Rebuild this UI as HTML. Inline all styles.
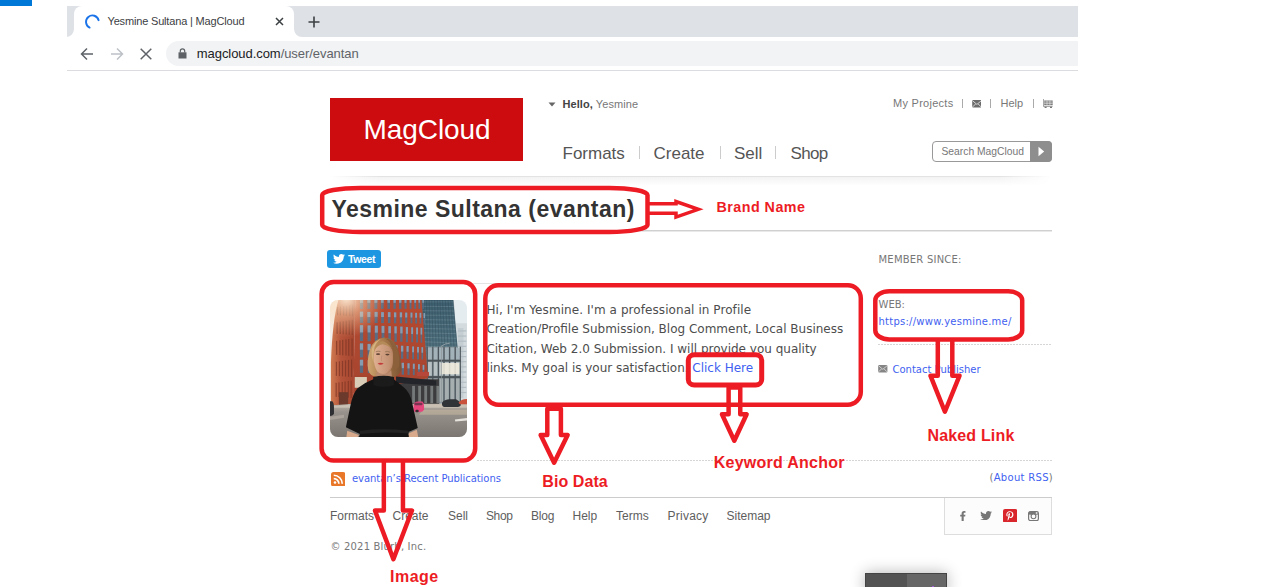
<!DOCTYPE html>
<html lang="en">
<head>
<meta charset="utf-8">
<title>Yesmine Sultana | MagCloud</title>
<style>
html,body{margin:0;padding:0;background:#fff;}
body{width:1262px;height:587px;position:relative;overflow:hidden;font-family:"Liberation Sans",sans-serif;}
.a{position:absolute;}
.t{position:absolute;white-space:nowrap;line-height:1;margin:0;padding:0;}
.v{font-family:"DejaVu Sans","Liberation Sans",sans-serif;}
.blue{color:#3f5ff0;}
.dot{height:1px;background:repeating-linear-gradient(90deg,#d6d6d6 0,#d6d6d6 1.6px,transparent 1.6px,transparent 3px);}
</style>
</head>
<body>
<!-- ============ browser chrome ============ -->
<div class="a" style="left:0;top:0;width:32px;height:6px;background:#0078d7"></div>
<div class="a" id="tabbar" style="left:67px;top:6px;width:1011px;height:31px;background:#dee1e6"></div>
<div class="a" id="tab" style="left:74px;top:6px;width:220px;height:31px;background:#fff;border-radius:8px 8px 0 0"></div>
<svg class="a" style="left:66px;top:29px" width="8" height="8" viewBox="0 0 8 8"><path d="M8 0V8H0A8 8 0 0 0 8 0Z" fill="#fff"/></svg>
<svg class="a" style="left:294px;top:29px" width="8" height="8" viewBox="0 0 8 8"><path d="M0 0V8H8A8 8 0 0 1 0 0Z" fill="#fff"/></svg>
<svg class="a" style="left:84px;top:13px" width="17" height="17" viewBox="0 0 17 17"><path d="M5.6 14.6A6.4 6.4 0 1 1 14.6 7.2" fill="none" stroke="#1a73e8" stroke-width="1.9" stroke-linecap="round"/></svg>
<span class="t" id="tabtitle" style="left:107.5px;top:16px;font-size:11px;letter-spacing:-0.17px;color:#3c4043">Yesmine Sultana | MagCloud</span>
<svg class="a" style="left:275px;top:17px" width="9" height="9" viewBox="0 0 9 9"><path d="M1 1L8 8M8 1L1 8" stroke="#3c4043" stroke-width="1.5" fill="none"/></svg>
<svg class="a" style="left:308px;top:16px" width="12" height="12" viewBox="0 0 12 12"><path d="M6 0.5V11.5M0.5 6H11.5" stroke="#3c4043" stroke-width="1.6" fill="none"/></svg>
<!-- toolbar -->
<svg class="a" style="left:80px;top:47px" width="14" height="14" viewBox="0 0 14 14"><path d="M13 7H2M7 1.5L1.5 7L7 12.5" stroke="#5f6368" stroke-width="1.5" fill="none"/></svg>
<svg class="a" style="left:110px;top:47px" width="14" height="14" viewBox="0 0 14 14"><path d="M1 7H12M7 1.5L12.5 7L7 12.5" stroke="#bdc1c6" stroke-width="1.5" fill="none"/></svg>
<svg class="a" style="left:140px;top:48px" width="12" height="12" viewBox="0 0 12 12"><path d="M0.7 0.7L11.3 11.3M11.3 0.7L0.7 11.3" stroke="#5f6368" stroke-width="1.5" fill="none"/></svg>
<div class="a" id="pill" style="left:166px;top:41px;width:912px;height:25px;background:#f1f3f4;border-radius:13px 0 0 13px"></div>
<svg class="a" style="left:178px;top:48px" width="9" height="11" viewBox="0 0 9 11"><path d="M0.5 4.3h8v6.2h-8z" fill="#5f6368"/><path d="M2.3 4.5V3a2.2 2.2 0 0 1 4.4 0v1.5" stroke="#5f6368" stroke-width="1.2" fill="none"/></svg>
<span class="t" id="url" style="left:196.8px;top:47px;font-size:13px;letter-spacing:-0.06px;color:#202124">magcloud.com<span style="color:#5f6368">/user/evantan</span></span>
<div class="a" style="left:67px;top:70px;width:1011px;height:1px;background:#dadce0"></div>

<!-- ============ page header ============ -->
<div class="a" id="logo" style="left:330px;top:98px;width:193px;height:62.5px;background:#cd0c10"></div>
<span class="t" id="logotext" style="left:363.6px;top:116px;font-size:28px;color:#fff;letter-spacing:-0.08px">MagCloud</span>
<svg class="a" style="left:548px;top:102px" width="8" height="5" viewBox="0 0 8 5"><path d="M0.5 0.5h7L4 4.5z" fill="#666"/></svg>
<span class="t" id="hello" style="left:562.5px;top:98.5px;letter-spacing:0.07px;font-size:11px;color:#444"><b>Hello,</b> <span style="color:#777">Yesmine</span></span>
<span class="t" id="n1" style="margin-top:0.5px;left:562.5px;top:144px;font-size:17px;color:#555">Formats</span>
<span class="t" id="n2" style="margin-top:0.5px;left:653.5px;top:144px;font-size:17px;color:#555">Create</span>
<span class="t" id="n3" style="margin-top:0.5px;left:734px;top:144px;font-size:17px;color:#555">Sell</span>
<span class="t" id="n4" style="margin-top:0.5px;left:790.5px;top:144px;font-size:17px;letter-spacing:-0.7px;color:#555">Shop</span>
<div class="a" style="left:639px;top:146px;width:1px;height:13px;background:#ccc"></div>
<div class="a" style="left:720px;top:146px;width:1px;height:13px;background:#ccc"></div>
<div class="a" style="left:775px;top:146px;width:1px;height:13px;background:#ccc"></div>
<span class="t" id="myp" style="left:893px;top:98.3px;font-size:11px;letter-spacing:0.27px;color:#777">My Projects</span>
<span class="t" id="help" style="left:1000.5px;top:98.3px;font-size:11px;color:#777">Help</span>
<div class="a" style="left:962px;top:99px;width:1px;height:9px;background:#aaa"></div>
<div class="a" style="left:990px;top:99px;width:1px;height:9px;background:#aaa"></div>
<div class="a" style="left:1033px;top:99px;width:1px;height:9px;background:#aaa"></div>
<svg class="a" id="mail1" style="left:971.6px;top:100.1px" width="9.8" height="7.5" viewBox="0 0 10 8"><rect x="0" y="0" width="10" height="8" rx="1" fill="#6a6a6a"/><path d="M0.5 0.9L5 4.7L9.5 0.9M0.6 7.300L3.600 4.200M9.400 7.300L6.400 4.200" stroke="#f0f0f0" stroke-width="0.85" fill="none"/></svg>
<svg class="a" id="cart" style="left:1042.5px;top:99px" width="10" height="9" viewBox="0 0 10 9"><path d="M0.3 0V7.3H9.6" stroke="#777" stroke-width="0.8" fill="none"/><rect x="1.2" y="1.5" width="8.5" height="4.6" fill="#777"/><path d="M1.2 3h8.5M1.2 4.6h8.5M4 1.5v4.6M6.9 1.5v4.6" stroke="#fff" stroke-width="0.5"/><rect x="1.6" y="7.8" width="2" height="1.2" fill="#777"/><rect x="7" y="7.8" width="2" height="1.2" fill="#777"/></svg>
<div class="a" id="search" style="left:932px;top:141px;width:119px;height:20px;border:1px solid #999;border-radius:4px;background:#fff;box-sizing:border-box;width:120px;height:21px"></div>
<div class="a" style="left:1030px;top:141px;width:22px;height:21px;background:#8e8e8e;border-radius:0 4px 4px 0"></div>
<svg class="a" style="left:1038px;top:146px" width="7" height="11" viewBox="0 0 7 11"><path d="M0.5 0.8L6.2 5.5L0.5 10.2z" fill="#fff"/></svg>
<span class="t" id="srch" style="left:941.5px;top:146.5px;font-size:10.3px;color:#777">Search MagCloud</span>
<div class="a" style="left:330px;top:176px;width:722px;height:1px;background:linear-gradient(90deg,rgba(226,226,226,0) 0,#e3e3e3 50px,#e3e3e3 670px,rgba(226,226,226,0) 100%)"></div>
<div class="a" style="left:330px;top:177px;width:722px;height:9px;background:linear-gradient(#f3f3f3,#fff);-webkit-mask-image:linear-gradient(90deg,transparent 0,#000 50px,#000 670px,transparent 100%);mask-image:linear-gradient(90deg,transparent 0,#000 50px,#000 670px,transparent 100%)"></div>

<!-- ============ page body ============ -->
<h1 class="t" id="title" style="left:331.4px;top:198.2px;font-size:23px;letter-spacing:0.48px;font-weight:bold;color:#333">Yesmine Sultana (evantan)</h1>
<div class="a" style="left:330px;top:230px;width:722px;height:2px;background:linear-gradient(#d0d0d0 0,#d0d0d0 50%,#e9e9e9 50%,#e9e9e9 100%)"></div>
<div class="a" id="tweet" style="left:327px;top:250px;width:54px;height:18px;background:#1d96e1;border-radius:3px"></div>
<svg class="a" style="left:333px;top:254px" width="12" height="10" viewBox="0 0 24 20"><path d="M24 2.4c-.9.4-1.8.7-2.8.8 1-.6 1.8-1.600 2.200-2.700-1 .6-2 1-3.100 1.200C19.400.7 18.100 0 16.600 0c-2.700 0-4.900 2.200-4.900 4.900 0 .4 0 .8.100 1.100C7.700 5.800 4.100 3.900 1.700.9 1.200 1.600 1 2.500 1 3.400c0 1.700.9 3.200 2.200 4.100-.8 0-1.600-.2-2.200-.6v.1c0 2.400 1.700 4.400 3.900 4.800-.4.100-.8.200-1.300.2-.3 0-.6 0-.9-.1.600 2 2.400 3.400 4.600 3.400-1.700 1.300-3.800 2.100-6.100 2.100-.4 0-.8 0-1.200-.1 2.200 1.400 4.800 2.200 7.500 2.200 9.100 0 14-7.500 14-14v-.6c1-.7 1.800-1.600 2.500-2.500z" fill="#fff"/></svg>
<span class="t" id="tweettxt" style="left:348px;top:254px;font-size:10.5px;font-weight:bold;color:#fff;letter-spacing:-0.4px">Tweet</span>
<div class="a" style="left:330px;top:283px;width:520px;height:1px;background:#e4e4e4"></div>

<!-- photo placeholder (replaced later) -->
<svg class="a" id="photo" style="left:330px;top:300px" width="137" height="137" viewBox="0 0 587 587"><defs>
<clipPath id="pc"><rect x="0" y="0" width="587" height="587" rx="34"/></clipPath>
<linearGradient id="sky" x1="0" y1="0" x2="1" y2="0"><stop offset="0" stop-color="#f3efec"/><stop offset="0.5" stop-color="#e9ecee"/><stop offset="1" stop-color="#e4ecf0"/></linearGradient>
<linearGradient id="road" x1="0" y1="0" x2="0" y2="1"><stop offset="0" stop-color="#b9b0a6"/><stop offset="0.25" stop-color="#98928c"/><stop offset="1" stop-color="#7b7671"/></linearGradient>
<linearGradient id="redf" x1="0" y1="0" x2="0" y2="1"><stop offset="0" stop-color="#b54a31"/><stop offset="1" stop-color="#a5442f"/></linearGradient>
<linearGradient id="reds" x1="0" y1="0" x2="1" y2="0"><stop offset="0" stop-color="#cf7a50"/><stop offset="0.4" stop-color="#b5543a"/><stop offset="1" stop-color="#a5452f"/></linearGradient>
<linearGradient id="glass" x1="0" y1="0" x2="0" y2="1"><stop offset="0" stop-color="#3d5e6e"/><stop offset="0.45" stop-color="#4f6f7d"/><stop offset="0.75" stop-color="#7e93a0"/><stop offset="1" stop-color="#5a6468"/></linearGradient>
<linearGradient id="hair" x1="0" y1="0" x2="1" y2="0"><stop offset="0" stop-color="#cfa671"/><stop offset="0.45" stop-color="#a87a4b"/><stop offset="1" stop-color="#7d5433"/></linearGradient>
<linearGradient id="skin" x1="0" y1="0" x2="1" y2="0"><stop offset="0" stop-color="#e0b092"/><stop offset="1" stop-color="#bd8a6c"/></linearGradient>
<radialGradient id="flare" cx="70" cy="-10" r="170" gradientUnits="userSpaceOnUse"><stop offset="0" stop-color="#fff3e0" stop-opacity="0.95"/><stop offset="0.45" stop-color="#ffd9b0" stop-opacity="0.5"/><stop offset="1" stop-color="#ffd0a0" stop-opacity="0"/></radialGradient>
</defs>
<g clip-path="url(#pc)">
<rect width="587" height="587" fill="url(#sky)"/>
<path d="M540,100H587V430H540Z" fill="#d3dbde"/>
<path d="M548,120H572V420H548Z" fill="#c4ced3"/>
<rect x="548" y="130" width="36" height="5" fill="#b3bec4"/>
<rect x="548" y="152" width="36" height="5" fill="#b3bec4"/>
<rect x="548" y="174" width="36" height="5" fill="#b3bec4"/>
<rect x="548" y="196" width="36" height="5" fill="#b3bec4"/>
<rect x="548" y="218" width="36" height="5" fill="#b3bec4"/>
<rect x="548" y="240" width="36" height="5" fill="#b3bec4"/>
<rect x="548" y="262" width="36" height="5" fill="#b3bec4"/>
<rect x="548" y="284" width="36" height="5" fill="#b3bec4"/>
<rect x="548" y="306" width="36" height="5" fill="#b3bec4"/>
<rect x="548" y="328" width="36" height="5" fill="#b3bec4"/>
<rect x="548" y="350" width="36" height="5" fill="#b3bec4"/>
<rect x="548" y="372" width="36" height="5" fill="#b3bec4"/>
<rect x="548" y="394" width="36" height="5" fill="#b3bec4"/>
<path d="M390,0H528L556,300V440H400Z" fill="url(#glass)"/>
<path d="M395,8L530,8" stroke="#9fb6c0" stroke-width="2.2" opacity="0.55"/>
<path d="M395,27L532,28" stroke="#9fb6c0" stroke-width="2.2" opacity="0.55"/>
<path d="M395,46L533,47" stroke="#9fb6c0" stroke-width="2.2" opacity="0.55"/>
<path d="M395,65L535,66" stroke="#9fb6c0" stroke-width="2.2" opacity="0.55"/>
<path d="M395,84L536,86" stroke="#9fb6c0" stroke-width="2.2" opacity="0.55"/>
<path d="M395,103L538,106" stroke="#9fb6c0" stroke-width="2.2" opacity="0.55"/>
<path d="M395,122L540,125" stroke="#9fb6c0" stroke-width="2.2" opacity="0.55"/>
<path d="M395,141L541,144" stroke="#9fb6c0" stroke-width="2.2" opacity="0.55"/>
<path d="M395,160L543,164" stroke="#9fb6c0" stroke-width="2.2" opacity="0.55"/>
<path d="M395,179L544,184" stroke="#9fb6c0" stroke-width="2.2" opacity="0.55"/>
<path d="M395,198L546,203" stroke="#9fb6c0" stroke-width="2.2" opacity="0.55"/>
<path d="M395,217L548,222" stroke="#9fb6c0" stroke-width="2.2" opacity="0.55"/>
<path d="M395,236L549,242" stroke="#9fb6c0" stroke-width="2.2" opacity="0.55"/>
<path d="M395,255L551,262" stroke="#9fb6c0" stroke-width="2.2" opacity="0.55"/>
<path d="M402,0L404,270" stroke="#29434f" stroke-width="2.4" opacity="0.6"/>
<path d="M414,0L417,270" stroke="#29434f" stroke-width="2.4" opacity="0.6"/>
<path d="M425,0L430,270" stroke="#29434f" stroke-width="2.4" opacity="0.6"/>
<path d="M436,0L444,270" stroke="#29434f" stroke-width="2.4" opacity="0.6"/>
<path d="M448,0L457,270" stroke="#29434f" stroke-width="2.4" opacity="0.6"/>
<path d="M460,0L470,270" stroke="#29434f" stroke-width="2.4" opacity="0.6"/>
<path d="M471,0L483,270" stroke="#29434f" stroke-width="2.4" opacity="0.6"/>
<path d="M482,0L496,270" stroke="#29434f" stroke-width="2.4" opacity="0.6"/>
<path d="M494,0L510,270" stroke="#29434f" stroke-width="2.4" opacity="0.6"/>
<path d="M506,0L523,270" stroke="#29434f" stroke-width="2.4" opacity="0.6"/>
<path d="M517,0L536,270" stroke="#29434f" stroke-width="2.4" opacity="0.6"/>
<path d="M528,0L549,270" stroke="#29434f" stroke-width="2.4" opacity="0.6"/>
<path d="M414,200H548L560,300V445H414Z" fill="#8c9aa0"/>
<rect x="420" y="205" width="16" height="50" fill="#a5b4bb" opacity="0.9"/>
<rect x="420" y="266" width="16" height="58" fill="#b9c3c5" opacity="0.95"/>
<rect x="420" y="336" width="16" height="100" fill="#a9b0b1" opacity="0.9"/>
<rect x="444" y="205" width="16" height="50" fill="#a5b4bb" opacity="0.9"/>
<rect x="444" y="266" width="16" height="58" fill="#b9c3c5" opacity="0.95"/>
<rect x="444" y="336" width="16" height="100" fill="#a9b0b1" opacity="0.9"/>
<rect x="468" y="205" width="16" height="50" fill="#a5b4bb" opacity="0.9"/>
<rect x="468" y="266" width="16" height="58" fill="#b9c3c5" opacity="0.95"/>
<rect x="468" y="336" width="16" height="100" fill="#a9b0b1" opacity="0.9"/>
<rect x="492" y="205" width="16" height="50" fill="#a5b4bb" opacity="0.9"/>
<rect x="492" y="266" width="16" height="58" fill="#b9c3c5" opacity="0.95"/>
<rect x="492" y="336" width="16" height="100" fill="#a9b0b1" opacity="0.9"/>
<rect x="516" y="205" width="16" height="50" fill="#a5b4bb" opacity="0.9"/>
<rect x="516" y="266" width="16" height="58" fill="#b9c3c5" opacity="0.95"/>
<rect x="516" y="336" width="16" height="100" fill="#a9b0b1" opacity="0.9"/>
<rect x="540" y="205" width="16" height="50" fill="#a5b4bb" opacity="0.9"/>
<rect x="540" y="266" width="16" height="58" fill="#b9c3c5" opacity="0.95"/>
<rect x="540" y="336" width="16" height="100" fill="#a9b0b1" opacity="0.9"/>
<rect x="414" y="200" width="5" height="245" fill="#3f484d" opacity="0.85"/>
<rect x="438" y="200" width="5" height="245" fill="#3f484d" opacity="0.85"/>
<rect x="462" y="200" width="5" height="245" fill="#3f484d" opacity="0.85"/>
<rect x="486" y="200" width="5" height="245" fill="#3f484d" opacity="0.85"/>
<rect x="510" y="200" width="5" height="245" fill="#3f484d" opacity="0.85"/>
<rect x="534" y="200" width="5" height="245" fill="#3f484d" opacity="0.85"/>
<rect x="556" y="200" width="5" height="245" fill="#3f484d" opacity="0.85"/>
<rect x="414" y="256" width="146" height="8" fill="#4a5358"/>
<rect x="414" y="326" width="146" height="9" fill="#4a5358"/>
<rect x="474" y="270" width="80" height="48" fill="#f4efdf" opacity="0.85"/>
<path d="M290,340H468V447H290Z" fill="#3c3c3e"/>
<rect x="352" y="368" width="12" height="74" fill="#8a8d8e" opacity="0.75"/>
<rect x="378" y="368" width="12" height="74" fill="#8a8d8e" opacity="0.75"/>
<rect x="404" y="368" width="12" height="74" fill="#8a8d8e" opacity="0.75"/>
<rect x="430" y="368" width="12" height="74" fill="#8a8d8e" opacity="0.75"/>
<rect x="456" y="368" width="12" height="74" fill="#8a8d8e" opacity="0.75"/>
<path d="M36,0H108L100,445L4,452V270Q10,90 36,0Z" fill="url(#reds)"/>
<rect x="30" y="30" width="5" height="35" fill="#7a3324" opacity="0.7"/>
<rect x="42" y="28" width="5" height="38" fill="#7a3324" opacity="0.7"/>
<rect x="56" y="26" width="5" height="41" fill="#7a3324" opacity="0.7"/>
<rect x="68" y="24" width="5" height="44" fill="#7a3324" opacity="0.7"/>
<rect x="82" y="22" width="5" height="47" fill="#7a3324" opacity="0.7"/>
<rect x="94" y="20" width="5" height="50" fill="#7a3324" opacity="0.7"/>
<rect x="28" y="95" width="5" height="50" fill="#7a3324" opacity="0.7"/>
<rect x="41" y="93" width="5" height="53" fill="#7a3324" opacity="0.7"/>
<rect x="54" y="91" width="5" height="56" fill="#7a3324" opacity="0.7"/>
<rect x="67" y="89" width="5" height="59" fill="#7a3324" opacity="0.7"/>
<rect x="80" y="87" width="5" height="62" fill="#7a3324" opacity="0.7"/>
<rect x="93" y="85" width="5" height="65" fill="#7a3324" opacity="0.7"/>
<rect x="26" y="175" width="5" height="60" fill="#7a3324" opacity="0.7"/>
<rect x="40" y="173" width="5" height="63" fill="#7a3324" opacity="0.7"/>
<rect x="52" y="171" width="5" height="66" fill="#7a3324" opacity="0.7"/>
<rect x="66" y="169" width="5" height="69" fill="#7a3324" opacity="0.7"/>
<rect x="78" y="167" width="5" height="72" fill="#7a3324" opacity="0.7"/>
<rect x="92" y="165" width="5" height="75" fill="#7a3324" opacity="0.7"/>
<rect x="25" y="265" width="5" height="60" fill="#7a3324" opacity="0.7"/>
<rect x="38" y="263" width="5" height="63" fill="#7a3324" opacity="0.7"/>
<rect x="51" y="261" width="5" height="66" fill="#7a3324" opacity="0.7"/>
<rect x="64" y="259" width="5" height="69" fill="#7a3324" opacity="0.7"/>
<rect x="77" y="257" width="5" height="72" fill="#7a3324" opacity="0.7"/>
<rect x="90" y="255" width="5" height="75" fill="#7a3324" opacity="0.7"/>
<rect x="24" y="355" width="5" height="60" fill="#7a3324" opacity="0.7"/>
<rect x="36" y="353" width="5" height="63" fill="#7a3324" opacity="0.7"/>
<rect x="50" y="351" width="5" height="66" fill="#7a3324" opacity="0.7"/>
<rect x="62" y="349" width="5" height="69" fill="#7a3324" opacity="0.7"/>
<rect x="76" y="347" width="5" height="72" fill="#7a3324" opacity="0.7"/>
<rect x="88" y="345" width="5" height="75" fill="#7a3324" opacity="0.7"/>
<path d="M108,0H392L420,335L100,400Z" fill="url(#redf)"/>
<rect x="128" y="-10" width="14" height="48" fill="#5a6c82"/>
<rect x="128" y="-10" width="14" height="22" fill="#8ea4ba" opacity="0.85"/>
<rect x="160" y="-10" width="13" height="48" fill="#5a6c82"/>
<rect x="160" y="-10" width="13" height="22" fill="#8ea4ba" opacity="0.85"/>
<rect x="190" y="-10" width="13" height="48" fill="#5a6c82"/>
<rect x="190" y="-10" width="13" height="22" fill="#8ea4ba" opacity="0.85"/>
<rect x="218" y="-10" width="12" height="48" fill="#5a6c82"/>
<rect x="218" y="-10" width="12" height="22" fill="#8ea4ba" opacity="0.85"/>
<rect x="246" y="-10" width="11" height="48" fill="#5a6c82"/>
<rect x="246" y="-10" width="11" height="22" fill="#8ea4ba" opacity="0.85"/>
<rect x="272" y="-10" width="10" height="48" fill="#5a6c82"/>
<rect x="272" y="-10" width="10" height="22" fill="#8ea4ba" opacity="0.85"/>
<rect x="296" y="-10" width="10" height="48" fill="#5a6c82"/>
<rect x="296" y="-10" width="10" height="22" fill="#8ea4ba" opacity="0.85"/>
<rect x="319" y="-10" width="9" height="48" fill="#5a6c82"/>
<rect x="319" y="-10" width="9" height="22" fill="#8ea4ba" opacity="0.85"/>
<rect x="341" y="-10" width="8" height="48" fill="#5a6c82"/>
<rect x="341" y="-10" width="8" height="22" fill="#8ea4ba" opacity="0.85"/>
<rect x="361" y="-10" width="8" height="48" fill="#5a6c82"/>
<rect x="361" y="-10" width="8" height="22" fill="#8ea4ba" opacity="0.85"/>
<rect x="379" y="-10" width="7" height="48" fill="#5a6c82"/>
<rect x="379" y="-10" width="7" height="22" fill="#8ea4ba" opacity="0.85"/>
<rect x="396" y="-10" width="6" height="48" fill="#5a6c82"/>
<rect x="396" y="-10" width="6" height="22" fill="#8ea4ba" opacity="0.85"/>
<rect x="128" y="50" width="14" height="48" fill="#5a6c82"/>
<rect x="128" y="50" width="14" height="22" fill="#8ea4ba" opacity="0.85"/>
<rect x="160" y="51" width="13" height="48" fill="#5a6c82"/>
<rect x="160" y="51" width="13" height="22" fill="#8ea4ba" opacity="0.85"/>
<rect x="191" y="51" width="13" height="48" fill="#5a6c82"/>
<rect x="191" y="51" width="13" height="21" fill="#8ea4ba" opacity="0.85"/>
<rect x="219" y="52" width="12" height="47" fill="#5a6c82"/>
<rect x="219" y="52" width="12" height="21" fill="#8ea4ba" opacity="0.85"/>
<rect x="248" y="52" width="11" height="47" fill="#5a6c82"/>
<rect x="248" y="52" width="11" height="21" fill="#8ea4ba" opacity="0.85"/>
<rect x="274" y="53" width="10" height="47" fill="#5a6c82"/>
<rect x="274" y="53" width="10" height="21" fill="#8ea4ba" opacity="0.85"/>
<rect x="299" y="53" width="10" height="47" fill="#5a6c82"/>
<rect x="299" y="53" width="10" height="21" fill="#8ea4ba" opacity="0.85"/>
<rect x="322" y="54" width="9" height="46" fill="#5a6c82"/>
<rect x="322" y="54" width="9" height="21" fill="#8ea4ba" opacity="0.85"/>
<rect x="345" y="54" width="8" height="46" fill="#5a6c82"/>
<rect x="345" y="54" width="8" height="21" fill="#8ea4ba" opacity="0.85"/>
<rect x="365" y="55" width="8" height="46" fill="#5a6c82"/>
<rect x="365" y="55" width="8" height="21" fill="#8ea4ba" opacity="0.85"/>
<rect x="384" y="55" width="7" height="46" fill="#5a6c82"/>
<rect x="384" y="55" width="7" height="21" fill="#8ea4ba" opacity="0.85"/>
<rect x="401" y="56" width="6" height="46" fill="#5a6c82"/>
<rect x="401" y="56" width="6" height="21" fill="#8ea4ba" opacity="0.85"/>
<rect x="128" y="108" width="14" height="68" fill="#5a6c82"/>
<rect x="128" y="108" width="14" height="31" fill="#8ea4ba" opacity="0.85"/>
<rect x="161" y="109" width="13" height="68" fill="#5a6c82"/>
<rect x="161" y="109" width="13" height="30" fill="#8ea4ba" opacity="0.85"/>
<rect x="192" y="110" width="13" height="67" fill="#5a6c82"/>
<rect x="192" y="110" width="13" height="30" fill="#8ea4ba" opacity="0.85"/>
<rect x="221" y="111" width="12" height="67" fill="#5a6c82"/>
<rect x="221" y="111" width="12" height="30" fill="#8ea4ba" opacity="0.85"/>
<rect x="250" y="112" width="11" height="66" fill="#5a6c82"/>
<rect x="250" y="112" width="11" height="30" fill="#8ea4ba" opacity="0.85"/>
<rect x="276" y="113" width="10" height="66" fill="#5a6c82"/>
<rect x="276" y="113" width="10" height="30" fill="#8ea4ba" opacity="0.85"/>
<rect x="301" y="114" width="10" height="65" fill="#5a6c82"/>
<rect x="301" y="114" width="10" height="29" fill="#8ea4ba" opacity="0.85"/>
<rect x="325" y="116" width="9" height="65" fill="#5a6c82"/>
<rect x="325" y="116" width="9" height="29" fill="#8ea4ba" opacity="0.85"/>
<rect x="348" y="117" width="8" height="64" fill="#5a6c82"/>
<rect x="348" y="117" width="8" height="29" fill="#8ea4ba" opacity="0.85"/>
<rect x="369" y="118" width="8" height="64" fill="#5a6c82"/>
<rect x="369" y="118" width="8" height="29" fill="#8ea4ba" opacity="0.85"/>
<rect x="388" y="119" width="7" height="64" fill="#5a6c82"/>
<rect x="388" y="119" width="7" height="29" fill="#8ea4ba" opacity="0.85"/>
<rect x="128" y="186" width="14" height="60" fill="#5a6c82"/>
<rect x="128" y="186" width="14" height="27" fill="#8ea4ba" opacity="0.85"/>
<rect x="161" y="188" width="13" height="59" fill="#5a6c82"/>
<rect x="161" y="188" width="13" height="27" fill="#8ea4ba" opacity="0.85"/>
<rect x="193" y="189" width="13" height="59" fill="#5a6c82"/>
<rect x="193" y="189" width="13" height="26" fill="#8ea4ba" opacity="0.85"/>
<rect x="222" y="191" width="12" height="58" fill="#5a6c82"/>
<rect x="222" y="191" width="12" height="26" fill="#8ea4ba" opacity="0.85"/>
<rect x="251" y="192" width="11" height="57" fill="#5a6c82"/>
<rect x="251" y="192" width="11" height="26" fill="#8ea4ba" opacity="0.85"/>
<rect x="279" y="194" width="10" height="57" fill="#5a6c82"/>
<rect x="279" y="194" width="10" height="26" fill="#8ea4ba" opacity="0.85"/>
<rect x="304" y="196" width="10" height="56" fill="#5a6c82"/>
<rect x="304" y="196" width="10" height="25" fill="#8ea4ba" opacity="0.85"/>
<rect x="328" y="197" width="9" height="55" fill="#5a6c82"/>
<rect x="328" y="197" width="9" height="25" fill="#8ea4ba" opacity="0.85"/>
<rect x="352" y="199" width="8" height="55" fill="#5a6c82"/>
<rect x="352" y="199" width="8" height="25" fill="#8ea4ba" opacity="0.85"/>
<rect x="373" y="201" width="8" height="54" fill="#5a6c82"/>
<rect x="373" y="201" width="8" height="24" fill="#8ea4ba" opacity="0.85"/>
<rect x="392" y="202" width="7" height="53" fill="#5a6c82"/>
<rect x="392" y="202" width="7" height="24" fill="#8ea4ba" opacity="0.85"/>
<rect x="128" y="256" width="14" height="56" fill="#5a6c82"/>
<rect x="128" y="256" width="14" height="25" fill="#8ea4ba" opacity="0.85"/>
<rect x="162" y="258" width="13" height="55" fill="#5a6c82"/>
<rect x="162" y="258" width="13" height="25" fill="#8ea4ba" opacity="0.85"/>
<rect x="194" y="260" width="13" height="54" fill="#5a6c82"/>
<rect x="194" y="260" width="13" height="24" fill="#8ea4ba" opacity="0.85"/>
<rect x="223" y="262" width="12" height="53" fill="#5a6c82"/>
<rect x="223" y="262" width="12" height="24" fill="#8ea4ba" opacity="0.85"/>
<rect x="253" y="265" width="11" height="52" fill="#5a6c82"/>
<rect x="253" y="265" width="11" height="24" fill="#8ea4ba" opacity="0.85"/>
<rect x="281" y="267" width="10" height="52" fill="#5a6c82"/>
<rect x="281" y="267" width="10" height="23" fill="#8ea4ba" opacity="0.85"/>
<rect x="307" y="269" width="10" height="51" fill="#5a6c82"/>
<rect x="307" y="269" width="10" height="23" fill="#8ea4ba" opacity="0.85"/>
<rect x="332" y="271" width="9" height="50" fill="#5a6c82"/>
<rect x="332" y="271" width="9" height="22" fill="#8ea4ba" opacity="0.85"/>
<rect x="355" y="273" width="8" height="49" fill="#5a6c82"/>
<rect x="355" y="273" width="8" height="22" fill="#8ea4ba" opacity="0.85"/>
<rect x="377" y="275" width="8" height="48" fill="#5a6c82"/>
<rect x="377" y="275" width="8" height="22" fill="#8ea4ba" opacity="0.85"/>
<rect x="397" y="278" width="7" height="47" fill="#5a6c82"/>
<rect x="397" y="278" width="7" height="21" fill="#8ea4ba" opacity="0.85"/>
<rect x="0" y="0" width="260" height="200" fill="url(#flare)"/>
<path d="M100,322L300,322L300,447L100,447Z" fill="#a6452f"/>
<rect x="106" y="330" width="52" height="46" fill="#d9cdb8"/>
<rect x="38" y="395" width="40" height="55" fill="#6b3a2c"/>
<path d="M283,328L455,345V366L283,356Z" fill="#24252a"/>
<rect x="372" y="308" width="52" height="18" fill="#b7473a"/>
<path d="M0,452L100,445L335,445H587V587H0Z" fill="url(#road)"/>
<path d="M0,455L110,447H587V462H0Z" fill="#cfc5b8" opacity="0.8"/>
<path d="M400,470H587V492H380Z" fill="#c9b9a3" opacity="0.55"/>
<path d="M535,512L587,506V516L537,521Z" fill="#e6e2dc"/>
<path d="M0,500L60,492V505L0,514Z" fill="#aaa39b"/>
<path d="M0,434H10Q17,440 17,460V488Q10,497 0,497Z" fill="#2d2f33"/>
<path d="M358,452Q360,436 378,435H396Q403,440 403,455V470Q398,480 385,480H364Q358,476 358,468Z" fill="#e6457c"/>
<rect x="362" y="440" width="34" height="11" rx="3" fill="#7a3350"/>
<rect x="366" y="470" width="14" height="11" rx="4" fill="#3a2a30"/>
<path d="M480,440Q488,426 515,425H540Q556,432 560,445V452Q556,458 548,458H488Q480,455 480,448Z" fill="#2f3236"/>
<path d="M553,438Q560,425 587,424V447H560Q553,446 553,442Z" fill="#c9503a"/>
<path d="M478,195V440" stroke="#8d949a" stroke-width="3"/>
<path d="M478,197Q495,185 512,186" stroke="#aab1b6" stroke-width="3" fill="none"/>
<path d="M188,338Q150,352 118,378Q98,400 88,450L68,545L128,574L124,587H340L336,566L376,548L352,440Q342,395 318,376Q295,355 272,338Z" fill="#141414"/>
<path d="M186,330Q230,320 274,330V365Q230,378 186,365Z" fill="#1b1b1b"/>
<path d="M74,560L124,578L118,587H70Z" fill="#d9a98b"/>
<path d="M336,572L372,556L378,587H338Z" fill="#d9a98b"/>
<path d="M128,560Q230,548 336,560V572Q230,562 128,574Z" fill="#232323"/>
<path d="M232,161Q186,165 170,215Q157,262 164,302Q172,326 200,330L268,332Q300,326 306,296Q305,250 292,212Q276,163 232,161Z" fill="url(#hair)"/>
<path d="M226,186Q192,190 187,240Q186,282 204,308Q220,324 234,320Q256,312 266,284Q274,246 266,214Q254,186 226,186Z" fill="url(#skin)"/>
<path d="M200,306Q228,330 262,300L266,332H196Z" fill="#b98a6e"/>
<path d="M186,330Q230,320 274,330V345Q230,335 186,345Z" fill="#1b1b1b"/>
<path d="M232,162Q200,170 190,205Q184,240 186,270Q176,240 178,215Q186,172 232,162Z" fill="#d5b27f"/>
<path d="M232,164Q262,172 270,215Q276,260 268,300Q284,300 296,285Q300,240 288,208Q272,166 232,164Z" fill="#8b603a"/>
<path d="M222,176Q246,180 262,206Q246,192 226,190Q206,192 194,210Q202,184 222,176Z" fill="#b48a58"/>
<path d="M250,196Q268,220 266,262Q262,296 236,320Q256,312 266,284Q274,246 266,214Z" fill="#b98467" opacity="0.8"/>
<ellipse cx="206" cy="232" rx="9" ry="3.5" fill="#5c4032"/>
<ellipse cx="246" cy="234" rx="9" ry="3.5" fill="#5c4032"/>
<path d="M196,222Q206,217 216,221" stroke="#8a6a4c" stroke-width="3" fill="none"/>
<path d="M236,222Q247,218 258,224" stroke="#8a6a4c" stroke-width="3" fill="none"/>
<path d="M222,238Q218,256 221,262" stroke="#b98a6e" stroke-width="3" fill="none"/>
<path d="M204,272Q216,266 230,272Q216,282 204,272Z" fill="#c23a3c"/>
</g></svg>

<div class="t v" id="bio" style="left:486.4px;top:301.1px;font-size:12px;line-height:19.25px;color:#4d4d4d;white-space:nowrap;width:370px"><span id="b1" style="letter-spacing:0.073px">Hi, I'm Yesmine. I'm a professional in Profile</span><br><span id="b2">Creation/Profile Submission, Blog Comment, Local Business</span><br><span id="b3">Citation, Web 2.0 Submission. I will provide you quality</span><br><span id="b4" style="letter-spacing:-0.022px">links. My goal is your satisfaction. </span><span class="blue" id="b5">Click Here</span></div>

<span class="t v" id="member" style="left:878.5px;top:254.5px;font-size:10px;letter-spacing:0.22px;color:#777">MEMBER SINCE:</span>
<span class="t v" id="web" style="left:878.5px;top:299.9px;font-size:10px;color:#777">WEB:</span>
<span class="t v blue" id="weblink" style="left:878.5px;top:316.5px;font-size:10px;letter-spacing:0.25px">https://www.yesmine.me/</span>
<div class="a dot" style="left:878px;top:344px;width:174px"></div>
<svg class="a" id="mail2" style="left:878.4px;top:365.3px" width="9.6" height="7.4" viewBox="0 0 10 8"><rect x="0" y="0" width="10" height="8" rx="1" fill="#858585"/><path d="M0.5 0.9L5 4.7L9.5 0.9M0.6 7.300L3.600 4.200M9.400 7.300L6.400 4.200" stroke="#e4e4e4" stroke-width="0.85" fill="none"/></svg>
<span class="t v blue" id="contact" style="left:892.5px;top:364.7px;font-size:10px">Contact Publisher</span>

<div class="a dot" style="left:477px;top:460px;width:575px"></div>
<svg class="a" id="rss" style="left:330.5px;top:471.5px" width="14.5" height="14.5" viewBox="0 0 29 29"><rect width="29" height="29" rx="5" fill="#e8772a"/><circle cx="8" cy="21" r="2.6" fill="#fff"/><path d="M5.5 13.200a10.300 10.300 0 0 1 10.300 10.300M5.500 6.500a17 17 0 0 1 17 17" stroke="#fff" stroke-width="3.400" fill="none"/></svg>
<span class="t v blue" id="recent" style="left:352px;top:473.7px;font-size:10px;letter-spacing:-0.05px">evantan’s Recent Publications</span>
<span class="t v" id="about" style="left:989.5px;top:472.7px;font-size:10px;letter-spacing:0.3px;color:#777">(<span class="blue">About RSS</span>)</span>
<div class="a" style="left:330px;top:497px;width:722px;height:1px;background:#ccc"></div>

<!-- footer -->
<div class="a" id="social" style="left:944px;top:498px;width:108px;height:37px;background:#fcfcfc;border:1px solid #ddd;border-top:none;box-sizing:border-box"></div>
<svg class="a" id="ifb" style="left:960px;top:510.5px" width="6" height="10" viewBox="0 0 6 10"><path d="M1.600 10V5.400H0.200V3.700H1.600V2.500C1.600 1 2.500 0.100 4 0.100C4.600 0.100 5.300 0.200 5.500 0.250V1.800H4.600C3.900 1.800 3.700 2.200 3.700 2.700V3.700H5.400L5.150 5.400H3.700V10Z" fill="#777"/></svg>
<svg class="a" id="itw" style="left:980.3px;top:510.6px" width="12.200" height="9.800" viewBox="0 0 24 20"><path d="M24 2.400c-.9.400-1.800.700-2.800.8 1-.6 1.800-1.600 2.200-2.700-1 .6-2 1-3.100 1.200C19.400.7 18.100 0 16.600 0c-2.700 0-4.900 2.200-4.900 4.900 0 .4 0 .8.100 1.100C7.700 5.800 4.100 3.900 1.700.9 1.200 1.600 1 2.500 1 3.400c0 1.700.9 3.200 2.200 4.100-.8 0-1.600-.2-2.200-.6v.1c0 2.400 1.700 4.400 3.900 4.800-.4.100-.8.200-1.300.2-.3 0-.6 0-.9-.1.600 2 2.400 3.400 4.600 3.400-1.700 1.300-3.800 2.100-6.100 2.100-.4 0-.8 0-1.200-.1 2.200 1.400 4.800 2.200 7.500 2.200 9.100 0 14-7.500 14-14v-.6c1-.7 1.800-1.600 2.500-2.500z" fill="#777"/></svg>
<svg class="a" id="ipin" style="left:1003px;top:508.700px" width="14.400" height="13.800" viewBox="0 0 14.400 13.800"><rect width="14.400" height="13.800" rx="2" fill="#d8262c"/><path d="M6.200 8.300C6 9.600 5.600 10.900 4.700 11.700C4.500 9.800 5.200 8.200 5.500 6.600C5 5.700 5.600 3.900 6.700 4.300C8 4.800 5.500 7.500 7.200 7.900C9 8.200 9.700 4.800 8.600 3.700C7 2.100 4 3.700 4.400 6C4.500 6.600 5.100 6.700 4.600 7.500C3.600 7.300 3.300 6.500 3.300 5.400C3.400 3.700 4.900 2.500 6.400 2.300C8.300 2.100 10.100 3 10.400 4.900C10.700 6.900 9.500 9.200 7.400 9C6.800 9 6.600 8.700 6.200 8.300Z" fill="#fff"/></svg>
<svg class="a" id="iig" style="left:1028.300px;top:510.600px" width="11" height="10.200" viewBox="0 0 11 10.200"><rect x="0.600" y="0.600" width="9.800" height="9" rx="1.800" fill="none" stroke="#777" stroke-width="1.200"/><rect x="0.600" y="0.600" width="9.800" height="3.100" rx="1.500" fill="#777"/><circle cx="5.500" cy="5.300" r="2.400" fill="#fcfcfc" stroke="#777" stroke-width="1.100"/><rect x="7.800" y="1.300" width="1.600" height="1.400" fill="#fcfcfc"/></svg>
<span class="t" style="left:330px;top:510px;font-size:12px;color:#5e5e5e" id="f1">Formats</span>
<span class="t" style="left:392.5px;top:510px;font-size:12px;color:#5e5e5e" id="f2">Create</span>
<span class="t" style="left:448px;top:510px;font-size:12px;color:#5e5e5e" id="f3">Sell</span>
<span class="t" style="left:486px;top:510px;font-size:12px;letter-spacing:-0.4px;color:#5e5e5e" id="f4">Shop</span>
<span class="t" style="left:531px;top:510px;font-size:12px;letter-spacing:-0.2px;color:#5e5e5e" id="f5">Blog</span>
<span class="t" style="left:572.5px;top:510px;font-size:12px;color:#5e5e5e" id="f6">Help</span>
<span class="t" style="left:616px;top:510px;font-size:12px;color:#5e5e5e" id="f7">Terms</span>
<span class="t" style="left:667.5px;top:510px;font-size:12px;letter-spacing:0.24px;color:#5e5e5e" id="f8">Privacy</span>
<span class="t" style="left:726.5px;top:510px;font-size:12px;color:#5e5e5e" id="f9">Sitemap</span>
<span class="t v" id="copy" style="left:330.5px;top:541.8px;font-size:10px;letter-spacing:0.18px;color:#777">© 2021 Blurb, Inc.</span>

<!-- bottom dark box -->
<div class="a" id="dark" style="left:865px;top:573px;width:82px;height:20px;background:#535353;border:1px solid #444;box-sizing:border-box;box-shadow:0 0 15px rgba(0,0,0,.3)"><div class="a" style="left:41px;top:0;width:39px;height:20px;background:#666"></div><div class="a" style="left:66px;top:12px;width:2px;height:2px;background:#a45ad8"></div></div>

<!-- ============ red annotations ============ -->
<svg class="a" id="anno" style="left:0;top:0" width="1262" height="587" viewBox="0 0 1262 587" fill="none" stroke="#ed1c24" stroke-width="4.5" stroke-linejoin="round" stroke-miterlimit="10">
<path d="M360.2,188.0H609.5A38,7 0 0 1 647.5,195.0V224.9A38,7 0 0 1 609.5,231.9H360.2A38,7 0 0 1 322.2,224.9V195.0A38,7 0 0 1 360.2,188.0Z"/>
<path d="M648,203.8H676V201.5L698.3,209.3L676,217.1V213.3H648" stroke-width="3.5" stroke-linejoin="miter"/>
<path d="M333.6,282.1H463.2A12,12 0 0 1 475.2,294.1V448.5A12,12 0 0 1 463.2,460.5H333.6A12,12 0 0 1 321.6,448.5V294.1A12,12 0 0 1 333.6,282.1Z"/>
<path d="M383.85,460.40V510.55H374.95L393.40,559.25L411.95,510.55H402.95V460.40"/>
<path d="M498.3,285.2H847.8A13,13 0 0 1 860.8,298.2V391.7A13,13 0 0 1 847.8,404.7H498.3A13,13 0 0 1 485.3,391.7V298.2A13,13 0 0 1 498.3,285.2Z"/>
<path d="M547.30,408.80V435.05H540.65L554.10,462.75L567.65,435.05H560.90V408.80Z"/>
<path d="M694.3,354.8H755.7A6,5.5 0 0 1 761.7,360.3V379.4A6,5.5 0 0 1 755.7,384.9H694.3A6,5.5 0 0 1 688.3,379.4V360.3A6,5.5 0 0 1 694.3,354.8Z" stroke-width="5"/>
<path d="M728.60,387.50V414.25H721.95L734.30,440.75L746.65,414.25H740.25V387.50Z"/>
<path d="M889.3,291.3H1008.2A14,9 0 0 1 1022.2,300.3V330.4A14,9 0 0 1 1008.2,339.4H889.3A14,9 0 0 1 875.3,330.4V300.3A14,9 0 0 1 889.3,291.3Z"/>
<path d="M937.80,340.00V375.65H930.45L944.90,411.75L959.55,375.65H952.30V340.00"/>
<text x="716.4" y="212.3" textLength="88.6" lengthAdjust="spacing" font-size="14.3" font-weight="bold" fill="#ed1c24" stroke="none" font-family="Liberation Sans, sans-serif">Brand Name</text>
<text x="390.1" y="582.3" textLength="48.1" lengthAdjust="spacing" font-size="16" font-weight="bold" fill="#ed1c24" stroke="none" font-family="Liberation Sans, sans-serif">Image</text>
<text x="542.3" y="487.3" textLength="65.4" lengthAdjust="spacing" font-size="16" font-weight="bold" fill="#ed1c24" stroke="none" font-family="Liberation Sans, sans-serif">Bio Data</text>
<text x="713.7" y="467.5" textLength="130.8" lengthAdjust="spacing" font-size="16" font-weight="bold" fill="#ed1c24" stroke="none" font-family="Liberation Sans, sans-serif">Keyword Anchor</text>
<text x="927.4" y="440.5" textLength="86.9" lengthAdjust="spacing" font-size="16" font-weight="bold" fill="#ed1c24" stroke="none" font-family="Liberation Sans, sans-serif">Naked Link</text>
</svg>
</body>
</html>
